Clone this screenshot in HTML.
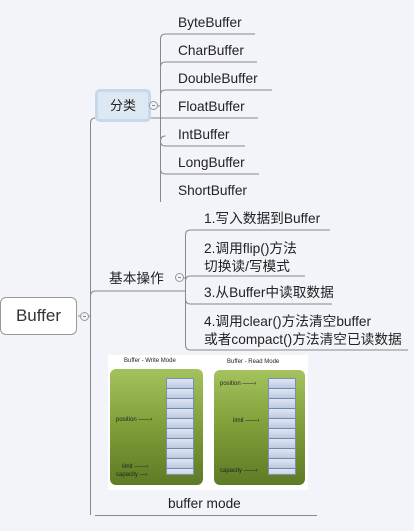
<!DOCTYPE html>
<html><head><meta charset="utf-8"><style>
body{margin:0;width:414px;height:531px;background:#f3f4f9;position:relative;overflow:hidden;font-family:"Liberation Sans","Noto Sans CJK SC",sans-serif;color:#222}
.t{position:absolute;font-size:13.7px;line-height:15px;white-space:nowrap}
.c{position:absolute;width:9px;height:9px;border:1px solid #999;border-radius:50%;background:#f3f4f9;box-sizing:border-box}
.c:after{content:"";position:absolute;left:2px;top:3px;width:3px;height:1px;background:#888}
.g{position:absolute;border-radius:6px;background:linear-gradient(#a4c35e,#7f9e38 50%,#5f7a26);}
.col{position:absolute;width:28px;border:1px solid #7b8fb0;box-sizing:border-box;background:repeating-linear-gradient(#dfe6f2 0,#bcc9e0 9px,#6f86ad 9px,#6f86ad 10px)}
.s{position:absolute;font-size:6px;color:#222;white-space:nowrap;font-family:"Liberation Sans",sans-serif}
</style></head><body>
<svg width="414" height="531" style="position:absolute;left:0;top:0" fill="none" stroke="#888" stroke-width="1">
<path d="M90.5 515 V123 q0-5 5-5 H258"/>
<path d="M90.5 296 q0-5 5-5 H185"/>
<path d="M78 316 H90"/>
<path d="M95 515.5 H317"/>
<path d="M160.5 202 V39 q0-5 5-5 H255"/>
<path d="M160.5 67 q0-5 5-5 H257"/>
<path d="M160.5 95 q0-5 5-5 H272"/>
<path d="M160.5 141 q0-5 5-5" />
<path d="M160.5 141 q0 5 5 5 H245"/>
<path d="M160.5 169 q0 5 5 5 H259"/>
<path d="M150 106 H160"/>
<path d="M185.5 345 V235 q0-5 5-5 H330"/>
<path d="M185.5 281 q0-5 5-5 H305"/>
<path d="M185.5 299 q0 5 5 5 H332"/>
<path d="M185.5 345 q0 5 5 5 H408"/>
<path d="M175 278 H185"/>
</svg>
<div style="position:absolute;left:0;top:297px;width:77px;height:38px;border:1px solid #999;border-radius:6px;background:#fff;box-sizing:border-box;font-size:17px;line-height:36px;text-align:center;color:#333">Buffer</div>
<div class="c" style="left:80px;top:312px"></div>
<div style="position:absolute;left:95px;top:89px;width:56px;height:33px;border:3px solid #c5d9ea;border-radius:5px;background:#dce8f2;box-sizing:border-box;font-size:13px;line-height:27px;text-align:center;font-family:'Liberation Sans','Noto Sans CJK SC',sans-serif">分类</div>
<div class="c" style="left:149px;top:101px"></div>
<div class="t" style="left:178px;top:15px">ByteBuffer</div>
<div class="t" style="left:178px;top:43px">CharBuffer</div>
<div class="t" style="left:178px;top:71px">DoubleBuffer</div>
<div class="t" style="left:178px;top:99px">FloatBuffer</div>
<div class="t" style="left:178px;top:127px">IntBuffer</div>
<div class="t" style="left:178px;top:155px">LongBuffer</div>
<div class="t" style="left:178px;top:183px">ShortBuffer</div>
<div class="t" style="left:109px;top:271px">基本操作</div>
<div class="c" style="left:175px;top:273px"></div>
<div class="t" style="left:204px;top:211px">1.写入数据到Buffer</div>
<div class="t" style="left:204px;top:240px;line-height:18px">2.调用flip()方法<br>切换读/写模式</div>
<div class="t" style="left:204px;top:285px">3.从Buffer中读取数据</div>
<div class="t" style="left:204px;top:313px;line-height:18px">4.调用clear()方法清空buffer<br>或者compact()方法清空已读数据</div>
<div style="position:absolute;left:108px;top:355px;width:200px;height:135px;background:#fff"></div>
<div class="s" style="left:124px;top:358px">Buffer - Write Mode</div>
<div class="s" style="left:227px;top:359px">Buffer - Read Mode</div>
<div class="g" style="left:110px;top:369px;width:93px;height:116px"></div>
<div class="g" style="left:214px;top:370px;width:91px;height:115px"></div>
<div class="col" style="left:166px;top:378px;height:97px"></div>
<div class="col" style="left:268px;top:378px;height:97px"></div>
<div class="s" style="left:116px;top:417px">position ——›</div>
<div class="s" style="left:122px;top:464px">limit ——›</div>
<div class="s" style="left:116px;top:472px">capacity —›</div>
<div class="s" style="left:220px;top:381px">position ——›</div>
<div class="s" style="left:233px;top:418px">limit ——›</div>
<div class="s" style="left:220px;top:468px">capacity ——›</div>
<div class="t" style="left:168px;top:496px">buffer mode</div>
</body></html>
